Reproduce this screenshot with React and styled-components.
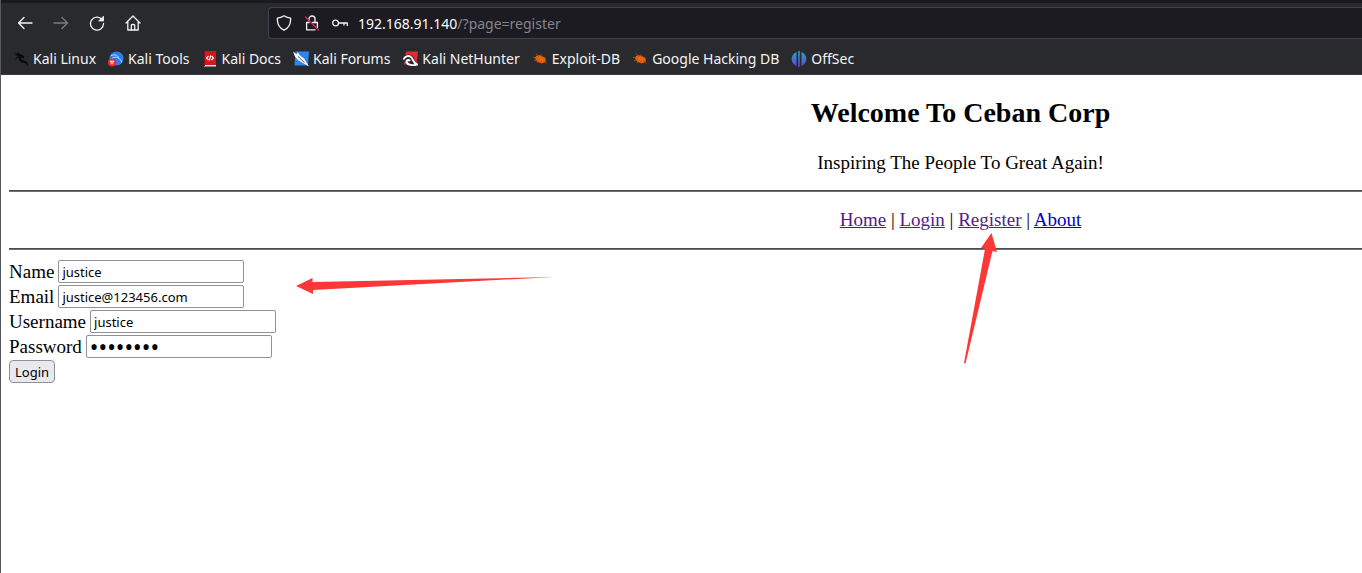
import React from "react";
import styled, { createGlobalStyle } from "styled-components";

const Global = createGlobalStyle`
  *, *::before, *::after { box-sizing: border-box; }
  body { margin: 0; background: #fff; }
`;

const Window = styled.div`
  position: relative;
  min-height: 100vh;
  overflow: hidden;
  border-left: 1px solid #58585c;
  background: #fff;
`;
const Chrome = styled.header`
  border-top: 3px solid #19191e;
  border-bottom: 1px solid #38383d;
  background: #292a2e;
  color: #f4f4f6;
  font-family: "Noto Sans", sans-serif;
  font-size: 14px;
`;
const Toolbar = styled.div`
  display: flex;
  align-items: center;
  height: 40px;
  padding-left: 14px;
`;
const ToolButton = styled.button`
  display: grid;
  place-items: center;
  width: 20px;
  height: 32px;
  margin-right: 16px;
  padding: 0;
  border: 0;
  background: none;
  color: #f4f4f6;
  opacity: ${(p) => (p.disabled ? 0.4 : 1)};
`;
const AddressBar = styled.div`
  display: flex;
  align-items: center;
  gap: 10px;
  flex: 1;
  height: 32px;
  margin-left: 109px;
  padding-left: 7px;
  border: 1px solid #42424a;
  border-right: 0;
  border-radius: 4px 0 0 4px;
  background: #1c1b22;
`;
const SiteInfo = styled.div`
  display: flex;
  gap: 12px;
`;
const Address = styled.a`
  color: #85858c;
  text-decoration: none;
`;
const Host = styled.span`
  color: #fbfbfe;
`;
const Bookmarks = styled.nav`
  display: flex;
  align-items: center;
  height: 31px;
  gap: 12px;
  padding-left: 12px;
`;
const Bookmark = styled.a`
  display: flex;
  align-items: center;
  gap: 4px;
  color: inherit;
  text-decoration: none;
  white-space: nowrap;
`;

const Page = styled.main`
  min-width: 1919px;
  padding: 0 8px;
  color: #000;
  font-family: "Liberation Serif", serif;
  font-size: 19px;
  line-height: 24px;
`;
const Banner = styled.div`
  text-align: center;
`;
const Title = styled.h1`
  margin: 0;
  padding: 20px 0;
  font-size: 28px;
  line-height: 36px;
`;
const Slogan = styled.p`
  margin: 0 0 15px;
`;
const Rule = styled.hr`
  height: 2px;
  margin: 0;
  border: 0;
  border-top: 1px solid #4c4c4e;
  border-bottom: 1px solid #707072;
`;
const Menu = styled.nav`
  padding: 16px 0;
  text-align: center;
`;
const MenuLink = styled.a`
  color: ${(p) => (p.$visited ? "#551a8b" : "#0000c8")};
  text-decoration-thickness: 1px;
`;
const Form = styled.form`
  display: flex;
  flex-direction: column;
  align-items: flex-start;
  gap: 2px;
  padding-top: 10px;
`;
const Field = styled.label`
  display: flex;
  align-items: center;
  gap: 4px;
  height: 23px;
`;
const TextBox = styled.input`
  width: 186px;
  height: 23px;
  padding: 1px 3px 0;
  border: 1px solid #8f8f9d;
  border-radius: 2px;
  background: #fff;
  color: #000;
  font-family: "Noto Sans", sans-serif;
  font-size: ${(p) => (p.type === "password" ? 23 : 13)}px;
`;
const Submit = styled.button`
  height: 23px;
  padding: 1px 5px 0;
  border: 1px solid #8f8f9d;
  border-radius: 4px;
  background: #e9e9ed;
  color: #000;
  font-family: "Noto Sans", sans-serif;
  font-size: 13px;
  line-height: 20px;
`;
const Marks = styled.svg`
  position: absolute;
  top: 0;
  left: -1px;
  pointer-events: none;
`;

const Icon = ({ children }) => (
  <svg width="16" height="16" viewBox="0 0 16 16" fill="none" stroke="currentColor" strokeWidth="1.3" strokeLinecap="round" strokeLinejoin="round" aria-hidden="true">
    {children}
  </svg>
);
const Favicon = ({ children }) => (
  <svg width="16" height="16" viewBox="0 0 16 16" aria-hidden="true">{children}</svg>
);

const KaliIcon = () => (
  <Favicon>
    <path d="M0.500 1.500L5 3L3.500 0.500L8 3.500C10.500 4 11.500 5.500 11 7.500C9.500 6.500 8 6.500 7.500 7.500C8 9.500 11.500 9 13.500 11C14.800 12 15.500 13.500 15 15.500C14 13 12 11.800 10 11.500C7 10.800 5 9 6.200 6.500C4.500 6.500 3 8 2 9.500C2.500 7 4 5.700 6 5C4 4.200 2.500 4.500 1 5L3.500 3.800Z" fill="#08080a" />
  </Favicon>
);
const ToolsIcon = () => (
  <Favicon>
    <circle cx="8.500" cy="7.500" r="7" fill="#2f7df0" />
    <path d="M3 4.500C7 3 11 4.500 10.500 7.500C12.500 8 13.500 9.500 13.500 11.500M4 7.500C7 5.500 9.500 6 10.500 7.500" fill="none" stroke="#c4dcff" strokeWidth="1" />
    <circle cx="4" cy="11.500" r="4" fill="#e8262b" />
    <path d="M1.800 10.200H6.200M3.200 10.200V13.300M4.900 10.200V13.300" stroke="#fff" strokeWidth="0.900" />
  </Favicon>
);
const DocsIcon = () => (
  <Favicon>
    <path d="M2 0H14V14H2Z" fill="#d8141c" />
    <path d="M2 14H14V15.500H2Z" fill="#e7dcdc" />
    <path d="M2 0H3V15H2Z" fill="#8d0d18" />
    <path d="M6.500 5L4.500 7L6.500 9M9.500 5L11.500 7L9.500 9M8.600 4.500L7.400 9.500" fill="none" stroke="#fff" strokeWidth="1.100" />
  </Favicon>
);
const ForumsIcon = () => (
  <Favicon>
    <path d="M2.500 0.500H16L15 14.500H1.500Z" fill="#2c84ee" />
    <path d="M0 0.500L4 3.500L4.500 1L7 4.500L11.500 8L16 15.500L10 12L5 9L2 5.500Z" fill="#fff" />
    <path d="M5 5.500L11.500 11.500" stroke="#1c2630" strokeWidth="0.800" />
  </Favicon>
);
const NetHunterIcon = () => (
  <Favicon>
    <path d="M4 0.500H16L14.500 13.500H2Z" fill="#e32a35" />
    <path d="M0.500 11C0 4 7 2 10 4.500C13 7 12 10 16 14C11 15.500 6 14 6.500 10" fill="#292a2e" />
    <path d="M1.500 8.500C3 4.500 7.500 4 9.500 6.500C11.500 9 11 12 15 13.500C9 15 4.500 13.500 4.500 10.500C4.800 8.800 7 8.500 8 10" fill="none" stroke="#fff" strokeWidth="1.900" />
  </Favicon>
);
const BugIcon = () => (
  <Favicon>
    <ellipse cx="8.500" cy="8" rx="5.500" ry="3.500" transform="rotate(22 8 8)" fill="#ea6410" />
    <path d="M1 6.500L5 7M2 9.500L6 9M4 2.500L7 6M9 3.500L9.500 6M12 6.500L14 7.500M6 10L5 12M9 10L9.500 13M11.500 10L14.500 12" stroke="#b94d10" strokeWidth="0.900" />
  </Favicon>
);
const OffSecIcon = () => (
  <Favicon>
    <defs>
      <linearGradient id="offsec" x1="0" y1="0" x2="0" y2="1">
        <stop offset="0" stopColor="#20a8c8" />
        <stop offset="1" stopColor="#6540d8" />
      </linearGradient>
    </defs>
    <path d="M5.500 1V15C-1 12 -1 4 5.500 1ZM7.200 0H8.800V16H7.200ZM10.500 1V15C17 12 17 4 10.500 1Z" fill="url(#offsec)" />
  </Favicon>
);

const bookmarks = [
  ["Kali Linux", KaliIcon],
  ["Kali Tools", ToolsIcon],
  ["Kali Docs", DocsIcon],
  ["Kali Forums", ForumsIcon],
  ["Kali NetHunter", NetHunterIcon],
  ["Exploit-DB", BugIcon],
  ["Google Hacking DB", BugIcon],
  ["OffSec", OffSecIcon],
];

const fields = [
  ["Name", "text", "justice"],
  ["Email", "email", "justice@123456.com"],
  ["Username", "text", "justice"],
  ["Password", "password", "justice1"],
];

export default function App() {
  return (
    <Window>
      <Global />
      <Chrome>
        <Toolbar>
          <ToolButton aria-label="Back"><Icon><path d="M15 8H1.500M7 2.500L1.500 8L7 13.500" /></Icon></ToolButton>
          <ToolButton aria-label="Forward" disabled><Icon><path d="M1 8H14.500M9 2.500L14.500 8L9 13.500" /></Icon></ToolButton>
          <ToolButton aria-label="Reload">
            <Icon><path d="M13 4.500A6.500 6.500 0 1 0 14.500 8.500" /><path d="M14.500 1.500V6H10Z" fill="currentColor" strokeWidth="0.800" /></Icon>
          </ToolButton>
          <ToolButton aria-label="Home">
            <Icon><path d="M1 8L8 1L15 8M2.800 6.500V15H13.200V6.500M6.300 15V10.500Q6.300 9.500 7.300 9.500H8.700Q9.700 9.500 9.700 10.500V15" /></Icon>
          </ToolButton>
          <AddressBar>
            <SiteInfo>
              <Icon><path d="M8 0.800Q11 3 14.600 3.200C15 9 12.500 13 8 15.200C3.500 13 1 9 1.400 3.200Q5 3 8 0.800Z" /></Icon>
              <Icon>
                <path d="M5 7.500H2.600V14.800H11M8.500 7.500H13.400V12.500M5 5.500V4A3 3 0 0 1 11 4V7.500" />
                <path d="M1.500 2L14.500 15" stroke="#e22850" />
              </Icon>
              <Icon><circle cx="3.600" cy="8" r="2.900" /><path d="M6.500 8H15.300V10.500M12 8V10" /></Icon>
            </SiteInfo>
            <Address href="#register"><Host>192.168.91.140</Host>/?page=register</Address>
          </AddressBar>
        </Toolbar>
        <Bookmarks>
          {bookmarks.map(([name, Mark]) => (
            <Bookmark key={name} href="#"><Mark />{name}</Bookmark>
          ))}
        </Bookmarks>
      </Chrome>
      <Page>
        <Banner>
          <Title>Welcome To Ceban Corp</Title>
          <Slogan>Inspiring The People To Great Again!</Slogan>
        </Banner>
        <Rule />
        <Menu>
          <MenuLink href="#home" $visited>Home</MenuLink> | <MenuLink href="#login" $visited>Login</MenuLink> |{" "}
          <MenuLink href="#register" $visited>Register</MenuLink> | <MenuLink href="#about">About</MenuLink>
        </Menu>
        <Rule />
        <Form>
          {fields.map(([name, type, value]) => (
            <Field key={name}>{name}<TextBox type={type} defaultValue={value} /></Field>
          ))}
          <Submit type="button">Login</Submit>
        </Form>
      </Page>
      <Marks width="1120" height="370" viewBox="0 0 1120 370" fill="#fb3737" aria-hidden="true">
        <path d="M296 286L312.500 278V282L554 277L313 290V294Z" />
        <path d="M991.500 233L997 252L992.500 251L965.500 363.500L964 363L985 249L981 248Z" />
      </Marks>
    </Window>
  );
}
